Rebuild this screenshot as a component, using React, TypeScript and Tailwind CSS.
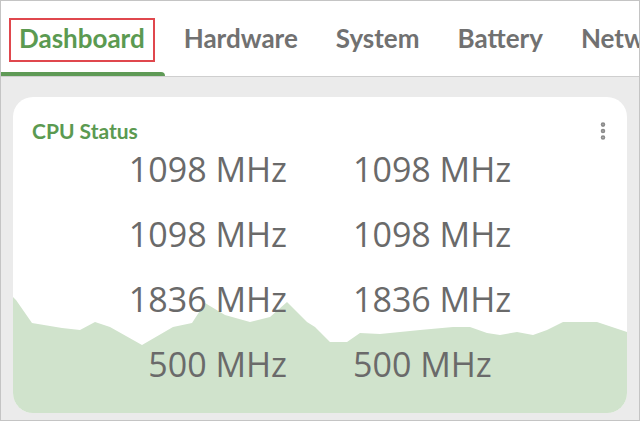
import { EllipsisVertical } from 'lucide-react';

const tabs = ['Dashboard', 'Hardware', 'System', 'Battery', 'Network'];

const freqs = [
  ['1098 MHz', '1098 MHz'],
  ['1098 MHz', '1098 MHz'],
  ['1836 MHz', '1836 MHz'],
  ['500 MHz', '500 MHz'],
];

// load history, in card coordinates (614 x 116)
const points =
  '0,0 3,3 19,26 49,31 67,33 82,25 97,30 129,48 160,30 179,26 192,6 212,18 237,25 257,20 274,5 294,25 302,30 317,45 334,45 347,36 367,37 387,35 407,33 440,30 457,30 474,36 487,38 504,35 520,38 534,33 550,25 584,25 614,35 614,116 0,116';

function LoadChart() {
  return (
    <svg
      className="absolute inset-x-0 bottom-0 w-full h-[116px]"
      viewBox="0 0 614 116"
      preserveAspectRatio="none"
    >
      <polygon points={points} fill="#d0e3cc" />
    </svg>
  );
}

export default function App() {
  return (
    <div className="w-[640px] h-[421px] border border-[#c4c4c4] bg-[#ebebeb] flex flex-col overflow-hidden">
      <div className="h-[76px] bg-white border-b border-[#cfcfcf] flex overflow-hidden whitespace-nowrap font-['Lato',sans-serif] font-bold text-[26px]">
        {tabs.map((t, i) => (
          <div
            key={t}
            className={
              'relative flex items-center ' +
              (i === 0 ? 'pl-[18px] pr-[20px] text-[#5b9a51]' : 'px-[19px] text-[#717171]')
            }
          >
            {t}
            {i === 0 && (
              <>
                <div className="absolute left-[8px] top-[17px] w-[146px] h-[44px] border-2 border-[#e0474d]" />
                <div className="absolute left-0 right-0 bottom-0 h-[4px] bg-[#5f9a56] rounded-tr-[4px]" />
              </>
            )}
          </div>
        ))}
      </div>

      <div className="flex-1 px-[12px] pt-[20px] pb-[7px]">
        <div className="relative h-full bg-white rounded-[20px] overflow-hidden pt-[22px]">
          <LoadChart />
          <div className="relative flex items-center justify-between h-[24px] pl-[19px] pr-[13px]">
            <span className="font-['Lato',sans-serif] font-bold text-[21px] leading-[24px] text-[#5b9a51]">
              CPU Status
            </span>
            <EllipsisVertical className="w-[22px] h-[22px] text-[#8c8c8c]" strokeWidth={3} />
          </div>
          <div className="relative mt-[-6px] grid grid-cols-2 gap-x-[66px] font-['Open_Sans',sans-serif] text-[34px] text-[#6a6a6a]">
            {freqs.map(([a, b], i) => (
              <div key={i} className="contents">
                <div className="h-[65px] flex items-center justify-end">{a}</div>
                <div className="h-[65px] flex items-center">{b}</div>
              </div>
            ))}
          </div>
        </div>
      </div>
    </div>
  );
}
